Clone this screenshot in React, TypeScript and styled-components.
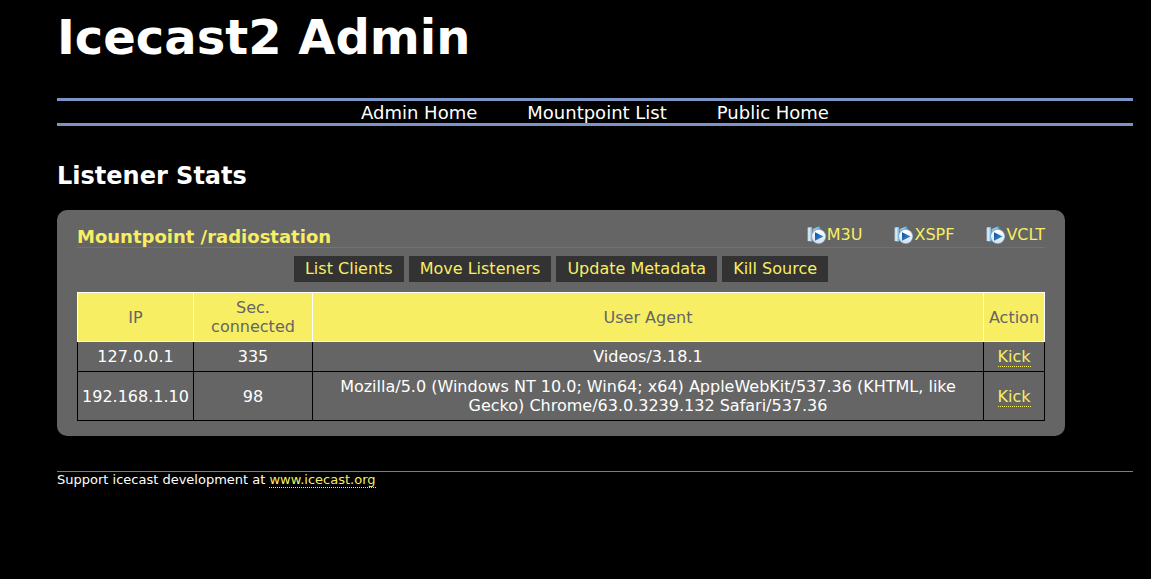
import React from "react";
import styled, { createGlobalStyle } from "styled-components";

const GlobalStyle = createGlobalStyle`
  body {
    margin: 0;
    background: #000;
    color: #fff;
    font-family: "DejaVu Sans", Verdana, sans-serif;
    font-size: 16px;
    line-height: 19px;
  }
`;

const Page = styled.div`
  padding: 0 18px 0 57px;
`;

const SiteTitle = styled.h1`
  margin: 0;
  padding: 9px 0 33px;
  font-size: 48px;
  line-height: 56px;
`;

const Menu = styled.nav`
  display: flex;
  justify-content: center;
  gap: 50px;
  padding-top: 1px;
  border-top: 3px solid #7b96c6;
  border-bottom: 3px solid #7b96c6;
  font-size: 18px;
  line-height: 21px;
`;

const MenuLink = styled.a`
  color: #fff;
  text-decoration: none;
`;

const SectionTitle = styled.h2`
  margin: 36px 0 20px;
  font-size: 24px;
  line-height: 28px;
`;

const Panel = styled.section`
  margin-right: 68px;
  padding: 16px 20px 15px;
  border-radius: 10px;
  background: #656565;
`;

const PanelHeader = styled.header`
  display: flex;
  justify-content: space-between;
  align-items: flex-start;
  border-bottom: 1px solid #727272;
`;

const PanelTitle = styled.h3`
  margin: 0;
  color: #f8ee63;
  font-size: 18px;
  line-height: 21px;
`;

const Playlists = styled.div`
  display: flex;
  gap: 32px;
`;

const PlaylistLink = styled.a`
  display: flex;
  color: #f8ee63;
  line-height: 17px;
  text-decoration: none;
`;

const PlayGlyph = styled.svg`
  display: block;
  width: 20px;
  height: 20px;
  margin-bottom: -3px;
`;

const Actions = styled.div`
  display: flex;
  justify-content: center;
  gap: 5px;
  padding: 8px 0 10px;
`;

const ActionLink = styled.a`
  padding: 3px 11px 4px;
  background: #333;
  color: #f8ee63;
  text-decoration: none;
`;

const Listeners = styled.table`
  width: 100%;
  border-collapse: collapse;
  text-align: center;
`;

const HeadCell = styled.th<{ $width?: number }>`
  width: ${(p) => (p.$width ? `${p.$width}px` : "auto")};
  padding: 5px 4px;
  border: 1px solid #fff;
  background: #f8ee63;
  color: #656565;
  font-weight: normal;
`;

const Cell = styled.td`
  padding: 5px 4px;
  border: 1px solid #000;
`;

const AgentText = styled.div`
  max-width: 640px;
  margin: 0 auto;
`;

const DottedLink = styled.a`
  border-bottom: 1px dotted #f8ee63;
  color: #f8ee63;
  text-decoration: none;
`;

const Footer = styled.footer`
  margin-top: 35px;
  border-top: 1px solid #7d7d7d;
  font-size: 13px;
  line-height: 16px;
`;

const PlayIcon = ({ id }: { id: string }) => (
  <PlayGlyph viewBox="0 0 20 20" aria-hidden="true">
    <defs>
      <linearGradient id={`${id}-sheet`} x1="0" y1="0" x2="1" y2="0">
        <stop offset="0" stopColor="#a9bac6" />
        <stop offset="0.35" stopColor="#e4f4fc" />
        <stop offset="1" stopColor="#6db4e2" />
      </linearGradient>
      <linearGradient id={`${id}-fold`} x1="0" y1="0" x2="1" y2="0">
        <stop offset="0" stopColor="#9fb4c2" />
        <stop offset="0.5" stopColor="#8ccbf0" />
        <stop offset="1" stopColor="#3f8fcb" />
      </linearGradient>
      <linearGradient id={`${id}-disc`} x1="0" y1="0" x2="0" y2="1">
        <stop offset="0" stopColor="#ffffff" />
        <stop offset="1" stopColor="#d3e0ee" />
      </linearGradient>
      <linearGradient id={`${id}-arrow`} x1="0" y1="0" x2="1" y2="1">
        <stop offset="0" stopColor="#124f96" />
        <stop offset="1" stopColor="#3b96dc" />
      </linearGradient>
    </defs>
    <path d="M0.5 1.5L5 1v14.5L0.5 15z" fill={`url(#${id}-sheet)`} />
    <path d="M5.5 3L12.5 0.2L14 4L9 15H5.5z" fill={`url(#${id}-fold)`} />
    <circle cx="11.7" cy="10.5" r="7.4" fill="#8aa4bf" />
    <circle cx="11.7" cy="10.5" r="6.7" fill={`url(#${id}-disc)`} />
    <path d="M8 6.2v8.6l8.5-4.3z" fill={`url(#${id}-arrow)`} />
  </PlayGlyph>
);

const menuItems = ["Admin Home", "Mountpoint List", "Public Home"];
const playlists = ["M3U", "XSPF", "VCLT"];
const actions = ["List Clients", "Move Listeners", "Update Metadata", "Kill Source"];
const listeners = [
  { ip: "127.0.0.1", seconds: 335, agent: "Videos/3.18.1" },
  {
    ip: "192.168.1.10",
    seconds: 98,
    agent:
      "Mozilla/5.0 (Windows NT 10.0; Win64; x64) AppleWebKit/537.36 (KHTML, like Gecko) Chrome/63.0.3239.132 Safari/537.36",
  },
];

export default function App() {
  return (
    <>
      <GlobalStyle />
      <Page>
        <SiteTitle>Icecast2 Admin</SiteTitle>
        <Menu>
          {menuItems.map((item) => (
            <MenuLink href="#" key={item}>{item}</MenuLink>
          ))}
        </Menu>
        <main>
          <SectionTitle>Listener Stats</SectionTitle>
          <Panel>
            <PanelHeader>
              <PanelTitle>Mountpoint /radiostation</PanelTitle>
              <Playlists>
                {playlists.map((name) => (
                  <PlaylistLink href="#" key={name}>
                    <PlayIcon id={name} />
                    {name}
                  </PlaylistLink>
                ))}
              </Playlists>
            </PanelHeader>
            <Actions>
              {actions.map((action) => (
                <ActionLink href="#" key={action}>{action}</ActionLink>
              ))}
            </Actions>
            <Listeners>
              <thead>
                <tr>
                  <HeadCell scope="col" $width={107}>IP</HeadCell>
                  <HeadCell scope="col" $width={110}>Sec. connected</HeadCell>
                  <HeadCell scope="col">User Agent</HeadCell>
                  <HeadCell scope="col" $width={52}>Action</HeadCell>
                </tr>
              </thead>
              <tbody>
                {listeners.map((row) => (
                  <tr key={row.ip}>
                    <Cell>{row.ip}</Cell>
                    <Cell>{row.seconds}</Cell>
                    <Cell><AgentText>{row.agent}</AgentText></Cell>
                    <Cell><DottedLink href="#">Kick</DottedLink></Cell>
                  </tr>
                ))}
              </tbody>
            </Listeners>
          </Panel>
        </main>
        <Footer>
          Support icecast development at <DottedLink href="#">www.icecast.org</DottedLink>
        </Footer>
      </Page>
    </>
  );
}
